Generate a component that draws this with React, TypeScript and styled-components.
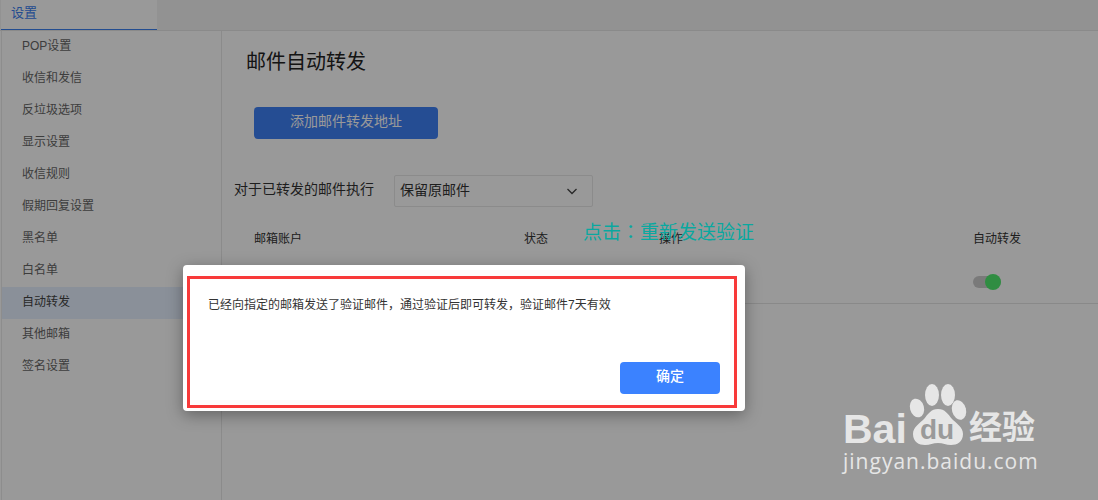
import React from "react";
import styled, { createGlobalStyle } from "styled-components";

const Global = createGlobalStyle`
  html, body { margin: 0; height: 500px; overflow: hidden; background: #fff; }
  body { font-family: "Liberation Sans", "Noto Sans CJK SC", sans-serif; }
  * { box-sizing: border-box; }
`;

const Page = styled.div`
  position: relative;
  width: 1098px;
  height: 500px;
  overflow: hidden;
  display: flex;
  flex-direction: column;
`;
const TabBar = styled.div`
  height: 31px;
  flex: none;
  background: #f4f4f4;
  border-bottom: 1px solid #e6e6e6;
  display: flex;
`;
const Tab = styled.div`
  width: 156px;
  height: 30px;
  margin-left: 1px;
  padding: 4px 0 0 10px;
  font-size: 13px;
  line-height: 18px;
  color: #3b80f0;
  background: #fff;
  border-bottom: 1px solid #3b80f0;
`;
const Body = styled.div`
  flex: 1;
  display: flex;
  min-height: 0;
`;
const Sidebar = styled.nav`
  width: 221px;
  flex: none;
  margin-left: 1px;
  border-left: 1px solid #ececec;
  border-right: 1px solid #e8e8e8;
  display: flex;
  flex-direction: column;
`;
const NavItem = styled.div<{ $active?: boolean }>`
  height: 32px;
  padding-left: 20px;
  font-size: 12px;
  line-height: 31px;
  color: ${(p) => (p.$active ? "#444" : "#666")};
  background: ${(p) => (p.$active ? "#e6f0ff" : "transparent")};
`;
const Main = styled.main`
  flex: 1;
  display: flex;
  flex-direction: column;
  padding-top: 16px;
`;
const Title = styled.h1`
  margin: 0 0 0 24px;
  font-size: 20px;
  font-weight: 400;
  line-height: 30px;
  color: #222;
`;
const AddButton = styled.div`
  width: 184px;
  height: 32px;
  margin: 30px 0 0 32px;
  border-radius: 4px;
  background: #3f80f5;
  color: #fff;
  font-size: 14px;
  line-height: 29px;
  text-align: center;
`;
const SelectRow = styled.div`
  display: flex;
  align-items: center;
  margin: 36px 0 0 12px;
`;
const SelectLabel = styled.span`
  width: 160px;
  font-size: 14px;
  line-height: 28px;
  margin-bottom: 4px;
  color: #333;
`;
const Select = styled.div`
  width: 199px;
  height: 32px;
  padding: 0 14px 5px 5px;
  border: 1px solid #e8e8e8;
  border-radius: 2px;
  display: flex;
  align-items: center;
  justify-content: space-between;
  font-size: 14px;
  color: #333;
`;
const Chevron = styled.svg`
  margin-top: 4px;
`;
const TableHead = styled.div`
  display: grid;
  grid-template-columns: 270px 135px 314px 1fr;
  margin: 22px 0 0 32px;
  font-size: 12px;
  line-height: 20px;
  color: #333;
`;
const TableRow = styled.div`
  height: 54px;
  margin-top: 1px;
  border-bottom: 1px solid #e4e4e4;
  display: flex;
  justify-content: flex-end;
  padding: 23px 97px 0 0;
`;
const Toggle = styled.div`
  position: relative;
  width: 28px;
  height: 12px;
  margin-top: 3px;
  border-radius: 6px;
  background: #ccc;
`;
const Knob = styled.span`
  position: absolute;
  right: 0;
  top: -2px;
  width: 16px;
  height: 16px;
  border-radius: 50%;
  background: #50ec6e;
`;
const Overlay = styled.div`
  position: absolute;
  inset: 0;
  background: rgba(0, 0, 0, 0.4);
`;
const Modal = styled.div`
  position: absolute;
  left: 183px;
  top: 265px;
  width: 562px;
  height: 146px;
  padding: 11px 8px 3px 4px;
  background: #fff;
  border-radius: 4px;
  box-shadow: 0 4px 16px rgba(0, 0, 0, 0.35);
`;
const Frame = styled.div`
  height: 100%;
  padding: 17px 14px 11px 18px;
  border: 3px solid #f83a3a;
  display: flex;
  flex-direction: column;
  justify-content: space-between;
`;
const Message = styled.p`
  margin: 0;
  font-size: 12px;
  line-height: 18px;
  color: #333;
`;
const Confirm = styled.div`
  align-self: flex-end;
  width: 100px;
  height: 32px;
  border-radius: 4px;
  background: #3b82ff;
  color: #fff;
  font-size: 14px;
  font-weight: 500;
  line-height: 29px;
  text-align: center;
`;
const Note = styled.div`
  position: absolute;
  left: 583px;
  top: 219px;
  font-size: 19px;
  line-height: 24px;
  color: #0aa8a0;
`;
const NotePunct = styled.span`
  font-family: "Noto Sans CJK TC", sans-serif;
`;
const Watermark = styled.div`
  position: absolute;
  left: 843px;
  top: 382px;
  width: 200px;
  color: #e6e6e6;
`;
const BrandRow = styled.div`
  display: flex;
  align-items: flex-end;
  height: 67px;
  position: relative;
`;
const Bai = styled.span`
  font-size: 41px;
  font-weight: 700;
  line-height: 40px;
`;
const Paw = styled.svg`
  position: absolute;
  left: 62px;
  top: 0;
`;
const Du = styled.span`
  position: absolute;
  left: 77px;
  top: 34px;
  font-size: 28px;
  font-weight: 700;
  line-height: 28px;
  color: #9a9a9a;
`;
const Jing = styled.span`
  position: absolute;
  left: 126px;
  top: 26px;
  font-size: 33px;
  font-weight: 700;
  line-height: 34px;
  white-space: nowrap;
  font-family: "Noto Sans CJK SC", sans-serif;
`;
const Url = styled.div`
  font-size: 21px;
  line-height: 24px;
  letter-spacing: 1px;
  white-space: nowrap;
  font-family: "Open Sans", sans-serif;
`;

const items = ["POP设置", "收信和发信", "反垃圾选项", "显示设置", "收信规则", "假期回复设置", "黑名单", "白名单", "自动转发", "其他邮箱", "签名设置"];

export default function App() {
  return (
    <Page>
      <Global />
      <TabBar><Tab>设置</Tab></TabBar>
      <Body>
        <Sidebar>
          {items.map((t) => (
            <NavItem key={t} $active={t === "自动转发"}>{t}</NavItem>
          ))}
        </Sidebar>
        <Main>
          <Title>邮件自动转发</Title>
          <AddButton>添加邮件转发地址</AddButton>
          <SelectRow>
            <SelectLabel>对于已转发的邮件执行</SelectLabel>
            <Select>
              保留原邮件
              <Chevron width="12" height="12" viewBox="0 0 12 12" fill="none" stroke="#444" strokeWidth="1.3"><path d="M1.5 4 6 8.5 10.5 4" /></Chevron>
            </Select>
          </SelectRow>
          <TableHead>
            <span>邮箱账户</span>
            <span>状态</span>
            <span>操作</span>
            <span>自动转发</span>
          </TableHead>
          <TableRow>
            <Toggle><Knob /></Toggle>
          </TableRow>
        </Main>
      </Body>
      <Overlay />
      <Modal>
        <Frame>
          <Message>已经向指定的邮箱发送了验证邮件，通过验证后即可转发，验证邮件7天有效</Message>
          <Confirm>确定</Confirm>
        </Frame>
      </Modal>
      <Note>点击<NotePunct>：</NotePunct>重新发送验证</Note>
      <Watermark>
        <BrandRow>
          <Bai>Bai</Bai>
          <Paw width="66" height="64" viewBox="0 0 66 64" fill="#e6e6e6">
            <ellipse cx="12" cy="26" rx="7" ry="9.5" transform="rotate(-15 12 26)" />
            <ellipse cx="27" cy="13" rx="7" ry="11" />
            <ellipse cx="43" cy="13" rx="7" ry="11" />
            <ellipse cx="54" cy="28" rx="7" ry="10" transform="rotate(-15 54 28)" />
            <path d="M33 27c7 0 10 5 14 10 4 4 11 8 11 15 0 8-6 11-12 11-5 0-8-2-13-2s-8 2-13 2c-6 0-12-3-12-11 0-7 7-11 11-15 4-5 7-10 14-10z" />
          </Paw>
          <Du>du</Du>
          <Jing>经验</Jing>
        </BrandRow>
        <Url>jingyan.baidu.com</Url>
      </Watermark>
    </Page>
  );
}
